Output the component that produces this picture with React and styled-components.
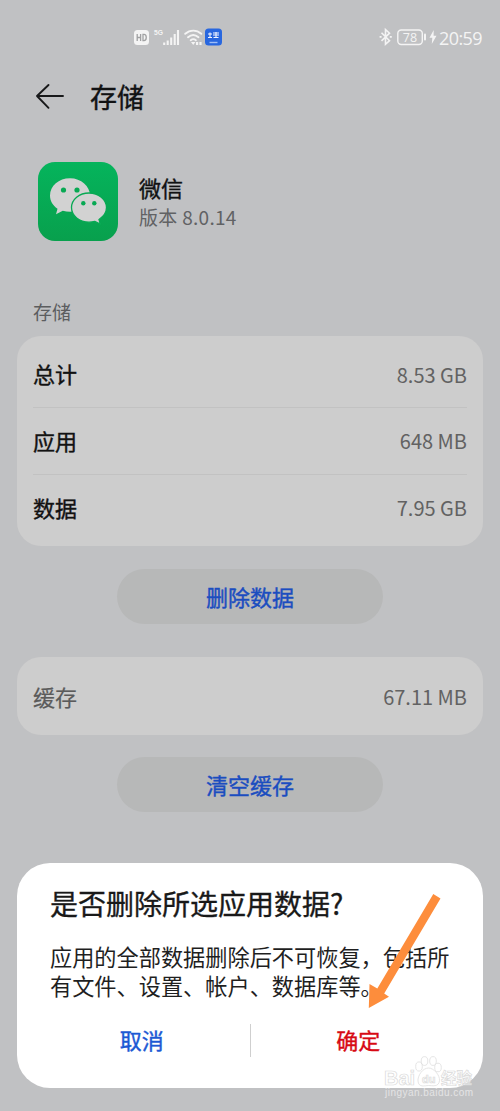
import React from "react";
import styled, { createGlobalStyle, css } from "styled-components";

const GlobalStyle = createGlobalStyle`
  * { box-sizing: border-box; }
  body {
    margin: 0;
    background: #c0c1c3;
    font-family: "Noto Sans CJK SC", sans-serif;
  }
`;

const medium = css`
  font-weight: 400;
  -webkit-text-stroke: 0.4px currentColor;
`;

const Screen = styled.main`
  position: relative;
  width: 500px;
  height: 1111px;
  overflow: hidden;
  background: #c0c1c3;
`;

const StatusBar = styled.div`
  height: 74px;
  padding: 0 19px 0 134px;
  display: flex;
  align-items: center;
  justify-content: space-between;
  color: #f4f4f4;
`;

const StatusGroup = styled.div`
  display: flex;
  align-items: center;
  height: 24px;
`;

const Clock = styled.span`
  width: 42px;
  margin-left: 2px;
  padding-top: 2px;
  font: 400 18px/24px "Open Sans", sans-serif;
  letter-spacing: -0.6px;
  white-space: nowrap;
`;

const Header = styled.header`
  display: flex;
  align-items: center;
  height: 46px;
  padding-left: 35px;
  gap: 25px;
`;

const Title = styled.h1`
  margin: 0;
  font-size: 27px;
  line-height: 44px;
  color: #111213;
  ${medium}
`;

const AppInfo = styled.section`
  display: flex;
  align-items: center;
  height: 80px;
  margin-top: 42px;
  padding-left: 38px;
  gap: 21px;
`;

const AppText = styled.div`
  padding-bottom: 1px;
`;

const AppName = styled.div`
  font-size: 22px;
  line-height: 29px;
  color: #111213;
  ${medium}
`;

const Version = styled.div`
  font-size: 19px;
  line-height: 29px;
  color: #616264;
  letter-spacing: 0.3px;
`;

const SectionLabel = styled.h2`
  margin: 55px 0 0 33px;
  font-size: 19px;
  font-weight: 400;
  line-height: 30px;
  color: #5c5d5f;
`;

const Card = styled.section`
  margin: ${(p) => p.$top}px 17px 0;
  padding: ${(p) => p.$pad};
  border-radius: 24px;
  background: #cdcdcd;
`;

const Row = styled.div`
  display: flex;
  align-items: center;
  justify-content: space-between;
  height: ${(p) => p.$height || 67}px;
  padding-top: 2px;
  & + & {
    padding-top: 0;
    border-top: 1px solid #c2c2c2;
  }
`;

const RowLabel = styled.span`
  padding-bottom: 3px;
  font-size: 22px;
  line-height: 30px;
  color: ${(p) => (p.$muted ? "#5b5b5b" : "#121212")};
  ${(p) => (p.$muted ? "-webkit-text-stroke: 0.2px currentColor;" : medium)}
`;

const RowValue = styled.span`
  font-size: 20px;
  line-height: 30px;
  color: #626262;
`;

const PillButton = styled.button`
  display: block;
  width: 266px;
  height: 55px;
  margin: ${(p) => p.$top}px auto 0;
  padding: 0 0 1px;
  border: 0;
  border-radius: 28px;
  background: #b7b8b8;
  color: #1b4dc0;
  font-family: inherit;
  font-size: 22px;
  line-height: 54px;
  ${medium}
`;

const Dialog = styled.section`
  position: absolute;
  left: 17px;
  right: 17px;
  bottom: 23px;
  height: 225px;
  padding: 20px 33px 0;
  border-radius: 33px;
  background: #fff;
`;

const DialogTitle = styled.h2`
  margin: 0;
  font-size: 28px;
  line-height: 40px;
  color: #191919;
  white-space: nowrap;
  font-weight: 400;
  -webkit-text-stroke: 0.35px currentColor;
`;

const DialogBody = styled.p`
  margin: 19px 0 0;
  font-size: 22.2px;
  line-height: 29px;
  color: #1f1f1f;
  white-space: nowrap;
`;

const Actions = styled.div`
  display: flex;
  align-items: center;
  height: 34px;
  margin: 23px -16px 0;
`;

const Action = styled.button`
  flex: 1;
  padding: 0 0 3px;
  border: 0;
  background: none;
  font-family: inherit;
  font-size: 22px;
  line-height: 34px;
  color: ${(p) => (p.$danger ? "#d70a14" : "#1c59d4")};
  ${medium}
`;

const Separator = styled.span`
  width: 1px;
  height: 33px;
  background: #cfcfcf;
`;

const Pointer = styled.svg`
  position: absolute;
  left: 360px;
  top: 885px;
`;

const Watermark = styled.svg`
  position: absolute;
  left: 376px;
  top: 1050px;
`;

const HdIcon = () => (
  <svg width="15" height="24" viewBox="0 0 15 24">
    <rect x="0" y="5" width="15" height="15" rx="3.5" fill="#f4f4f4" />
    <path d="M3.200 9v7M6.600 9v7M3.200 12.500h3.400M9 9.400v6.200h1c3 0 3-6.200 0-6.200z" fill="none" stroke="#a0a1a2" strokeWidth="1.3" />
  </svg>
);

const SignalIcon = () => (
  <svg width="33" height="24" viewBox="-5 0 33 24">
    <text x="0" y="9.500" fontSize="8" fontWeight="700" fontFamily="Liberation Sans, sans-serif" fill="#f4f4f4" textLength="9" lengthAdjust="spacingAndGlyphs">5G</text>
    <path d="M10.200 17.500v2.500M13.700 15.500V20M17.200 12.500V20M20.700 9V20M24 5V20" stroke="#f4f4f4" strokeWidth="2.100" />
  </svg>
);

const WifiIcon = () => (
  <svg width="21" height="24" viewBox="-2 0 21 24">
    <path d="M1.200 8.800C6 4.500 12.600 4.500 17.300 8.800M4 12.200c3.200-2.800 7.300-2.800 10.500 0M6.700 15.200c1.600-1.300 3.600-1.300 5.200 0" fill="none" stroke="#f4f4f4" strokeWidth="1.900" strokeLinecap="round" />
    <path d="M7 17h4.400l-2.200 3zM12 17h2.200v3H12zM15.400 17h2.200v3h-2.200z" fill="#f4f4f4" />
  </svg>
);

const BadgeIcon = () => (
  <svg width="19" height="24" viewBox="-2 0 19 24">
    <rect y="3.500" width="17" height="17" rx="3.500" fill="#2867df" />
    <path d="M3 9h4M5 7.500v5M3 12.500h4M8 8h6M8 10h6M11 7v6M8.500 12.500h5" stroke="#f1f5ff" strokeWidth="1.100" />
    <path d="M4.500 17.500h8" stroke="#9fbef6" strokeWidth="1.400" />
  </svg>
);

const BluetoothIcon = () => (
  <svg width="14" height="24" viewBox="0 0 14 24">
    <path d="M2.500 7.800l8 7.900-4 3.600V4.500l4 3.700-8 7.700" fill="none" stroke="#f4f4f4" strokeWidth="1.600" />
    <path d="M.6 11.800h2M10.800 11.800h2" stroke="#f4f4f4" strokeWidth="1.800" />
  </svg>
);

const BatteryIcon = () => (
  <svg width="34" height="24" viewBox="-4 0 34 24">
    <rect x=".8" y="5" width="24.500" height="14.500" rx="3.500" fill="none" stroke="#f4f4f4" strokeWidth="1.400" />
    <path d="M28 9.500v5" stroke="#f4f4f4" strokeWidth="2" strokeLinecap="round" />
    <text x="13" y="17" fontSize="12.500" textAnchor="middle" fontFamily="Open Sans, sans-serif" fill="#f4f4f4">78</text>
  </svg>
);

const BoltIcon = () => (
  <svg width="10" height="24" viewBox="-2 0 10 24">
    <path d="M4.700 5L.5 12.800h2.800L2.800 19 7.500 10.700H4.600z" fill="#f4f4f4" />
  </svg>
);

const BackIcon = () => (
  <svg width="30" height="30" viewBox="0 0 30 30">
    <path d="M2 14h26M13.500 3L2 14l11.500 11.800" fill="none" stroke="#18191a" strokeWidth="1.900" strokeLinecap="round" strokeLinejoin="round" />
  </svg>
);

const WeChatIcon = () => (
  <svg width="80" height="80" viewBox="0 0 80 80">
    <defs>
      <linearGradient id="green" x1="0" y1="0" x2="0" y2="1">
        <stop offset="0" stopColor="#05b45c" />
        <stop offset="1" stopColor="#08a04d" />
      </linearGradient>
    </defs>
    <rect y="0" width="80" height="79" rx="17" fill="url(#green)" />
    <path d="M32 16.300C20.800 16.300 12 24 12 33.500c0 5.500 2.800 10 7.500 13.200L18 52.300l6.800-3.500c2.400.7 4.700 1 7.200 1 11.200 0 20-7.200 20-16.300S43.200 16.300 32 16.300z" fill="#d2d2d2" />
    <path d="M51 31c-9.700 0-17.500 6.500-17.500 14.600S41.300 60.200 51 60.200c2 0 4-.3 5.900-.8l5.400 2.800-1.300-4.700c4.200-2.700 7.500-7 7.500-11.900C68.500 37.500 60.500 31 51 31z" fill="#d2d2d2" stroke="#08a953" strokeWidth="1.300" />
    <g fill="#08a953">
      <circle cx="25.500" cy="28" r="2.600" />
      <circle cx="39" cy="28" r="2.600" />
      <circle cx="45.300" cy="41.200" r="2.200" />
      <circle cx="56.300" cy="41.200" r="2.200" />
    </g>
  </svg>
);

const storage = [
  ["总计", "8.53 GB"],
  ["应用", "648 MB"],
  ["数据", "7.95 GB"],
];

export default function App() {
  return (
    <Screen>
      <GlobalStyle />
      <StatusBar>
        <StatusGroup>
          <HdIcon />
          <SignalIcon />
          <WifiIcon />
          <BadgeIcon />
        </StatusGroup>
        <StatusGroup>
          <BluetoothIcon />
          <BatteryIcon />
          <BoltIcon />
          <Clock>20:59</Clock>
        </StatusGroup>
      </StatusBar>
      <Header>
        <BackIcon />
        <Title>存储</Title>
      </Header>
      <AppInfo>
        <WeChatIcon />
        <AppText>
          <AppName>微信</AppName>
          <Version>版本 8.0.14</Version>
        </AppText>
      </AppInfo>
      <SectionLabel>存储</SectionLabel>
      <Card $top={9} $pad="4px 16px 5px">
        {storage.map(([label, value]) => (
          <Row key={label}>
            <RowLabel>{label}</RowLabel>
            <RowValue>{value}</RowValue>
          </Row>
        ))}
      </Card>
      <PillButton $top={23}>删除数据</PillButton>
      <Card $top={33} $pad="5px 16px">
        <Row $height={68}>
          <RowLabel $muted>缓存</RowLabel>
          <RowValue>67.11 MB</RowValue>
        </Row>
      </Card>
      <PillButton $top={22}>清空缓存</PillButton>
      <Dialog>
        <DialogTitle>是否删除所选应用数据?</DialogTitle>
        <DialogBody>
          应用的全部数据删除后不可恢复，包括所
          <br />
          有文件、设置、帐户、数据库等。
        </DialogBody>
        <Actions>
          <Action>取消</Action>
          <Separator />
          <Action $danger>确定</Action>
        </Actions>
      </Dialog>
      <Pointer width="90" height="130" viewBox="0 0 90 130">
        <path d="M73.300 9L80.500 13.500 24.200 108.500 29 111.700 8.800 123 9.500 99 17.300 103.500z" fill="#fd8d3c" />
      </Pointer>
      <Watermark width="110" height="50" viewBox="0 0 110 50">
        <g fill="#fff" fillOpacity=".5" stroke="#dadada" strokeWidth=".7">
          <text x="8" y="35" fontSize="20" fontWeight="700" fontFamily="Liberation Sans, sans-serif" textLength="31">Bai</text>
          <ellipse cx="43" cy="16.500" rx="3.300" ry="4.600" />
          <ellipse cx="48.500" cy="11" rx="3.300" ry="4.400" />
          <ellipse cx="57" cy="11" rx="3.300" ry="4.400" />
          <ellipse cx="62" cy="17.500" rx="3.300" ry="4.300" />
          <path d="M52.500 18c-6 0-11 8-10.500 13 .5 7 7 4.500 10.500 4.500s10.500 2 11-5C64 25.500 58 18 52.500 18z" />
          <text x="46" y="33" fontSize="11" fontWeight="700" fontFamily="Liberation Sans, sans-serif">du</text>
          <text x="65" y="34" fontSize="15.500" fontWeight="700" fontFamily="Noto Sans CJK SC, sans-serif">经验</text>
        </g>
        <text x="9" y="46" fontSize="10" fontFamily="Liberation Sans, sans-serif" fill="#e4e4e5" textLength="88">jingyan.baidu.com</text>
      </Watermark>
    </Screen>
  );
}
